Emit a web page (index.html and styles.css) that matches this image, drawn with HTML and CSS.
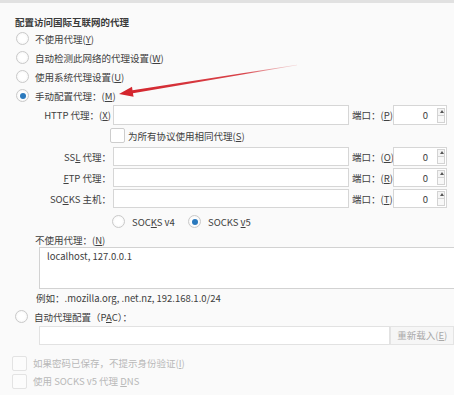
FILE: index.html
```html
<!DOCTYPE html>
<html lang="zh-CN">

<head>
  <meta charset="UTF-8">
  <meta name="viewport" content="width=device-width, initial-scale=1.0">
  <title>连接设置</title>
  <link rel="stylesheet" href="styles.css">
</head>

<body>
  <div class="dialog">
    <div class="title">配置访问国际互联网的代理</div>

    <div class="option"><span class="radio"></span><span>不使用代理(<u>Y</u>)</span></div>
    <div class="option"><span class="radio"></span><span>自动检测此网络的代理设置(<u>W</u>)</span></div>
    <div class="option"><span class="radio"></span><span>使用系统代理设置(<u>U</u>)</span></div>
    <div class="option"><span class="radio checked"></span><span>手动配置代理：(<u>M</u>)</span></div>

    <div class="proxy-row first">
      <label class="proxy-label">HTTP 代理：(<u>X</u>)</label>
      <div class="field"></div>
      <label class="port-label">端口：(<u>P</u>)</label>
      <div class="port">0<span class="spin"><i class="up"></i><i class="down"></i></span></div>
    </div>

    <div class="same-row"><span class="check"></span><span>为所有协议使用相同代理(<u>S</u>)</span></div>

    <div class="proxy-row">
      <label class="proxy-label">SS<u>L</u> 代理：</label>
      <div class="field"></div>
      <label class="port-label">端口：(<u>O</u>)</label>
      <div class="port">0<span class="spin"><i class="up"></i><i class="down"></i></span></div>
    </div>

    <div class="proxy-row">
      <label class="proxy-label"><u>F</u>TP 代理：</label>
      <div class="field"></div>
      <label class="port-label">端口：(<u>R</u>)</label>
      <div class="port">0<span class="spin"><i class="up"></i><i class="down"></i></span></div>
    </div>

    <div class="proxy-row">
      <label class="proxy-label">SO<u>C</u>KS 主机：</label>
      <div class="field"></div>
      <label class="port-label">端口：(<u>T</u>)</label>
      <div class="port">0<span class="spin"><i class="up"></i><i class="down"></i></span></div>
    </div>

    <div class="version-row">
      <div class="version"><span class="radio"></span><span>SOC<u>K</u>S v4</span></div>
      <div class="version"><span class="radio checked"></span><span>SOCKS <u>v</u>5</span></div>
    </div>

    <div class="noproxy-label">不使用代理：(<u>N</u>)</div>
    <div class="noproxy">localhost, 127.0.0.1</div>
    <div class="example">例如：.mozilla.org, .net.nz, 192.168.1.0/24</div>

    <div class="option pac"><span class="radio"></span><span>自动代理配置（P<u>A</u>C）：</span></div>
    <div class="pac-row">
      <div class="pac-field"></div>
      <div class="reload">重新载入(<u>E</u>)</div>
    </div>

    <div class="disabled-check first"><span class="check"></span><span>如果密码已保存，不提示身份验证(<u>I</u>)</span></div>
    <div class="disabled-check"><span class="check"></span><span>使用 SOCKS v5 代理 <u>D</u>NS</span></div>

    <!-- annotation arrow drawn over the dialog -->
    <svg class="arrow" width="454" height="395" viewBox="0 0 454 395">
      <defs>
        <linearGradient id="fade" x1="119" y1="94" x2="297" y2="65" gradientUnits="userSpaceOnUse">
          <stop offset="0" stop-color="#d3232b" />
          <stop offset="0.7" stop-color="#d8434a" />
          <stop offset="1" stop-color="#e8a0a3" stop-opacity="0.4" />
        </linearGradient>
      </defs>
      <polygon fill="url(#fade)"
        points="119,94 133.6,96.7 132.9,93.3 297,65.3 297,64.7 132.5,90.2 132,86.8" />
    </svg>
  </div>
</body>

</html>
```

FILE: styles.css
```css
body {
  margin: 0;
  background-color: #fafafa;
  color: #404040;
  font-family: "Noto Sans CJK SC", "Noto Sans", sans-serif;
  font-size: 9.5px;
}

u {
  text-underline-offset: 1px;
}

.dialog {
  position: relative;
  height: 380px;
  padding-top: 12px;
  border-top: 3px solid #e1e1e1;
  overflow: hidden;
}

.title {
  height: 14px;
  line-height: 14px;
  padding-left: 15px;
  font-weight: 600;
  color: #3a3a3a;
}

.option {
  height: 19px;
  display: flex;
  align-items: center;
  gap: 6px;
  padding-left: 16px;
}

.radio {
  width: 11px;
  height: 11px;
  border: 1px solid #c9c9c9;
  border-radius: 50%;
  background: radial-gradient(circle, #ffffff 40%, #f1f1f1 100%);
  display: flex;
  justify-content: center;
  align-items: center;
  flex: none;
}

.radio.checked::after {
  content: "";
  width: 6px;
  height: 6px;
  border-radius: 50%;
  background-color: #2a79bd;
}

.check {
  width: 13px;
  height: 13px;
  border: 1px solid #cdcdcd;
  border-radius: 2px;
  background-color: #fff;
  flex: none;
}

/* proxy host + port rows */
.proxy-row {
  display: grid;
  grid-template-columns: 111px 236px 40px 54px;
  column-gap: 2px;
  align-items: center;
  height: 21px;
}

.proxy-row.first {
  height: 20px;
}

.proxy-label {
  text-align: right;
  white-space: nowrap;
}

.port-label {
  padding-left: 1px;
  white-space: nowrap;
}

.field,
.port {
  height: 17px;
  border: 1px solid #d6d6d6;
  background-color: #fff;
}

.proxy-row.first .field,
.proxy-row.first .port {
  height: 18px;
}

.port {
  display: flex;
  justify-content: flex-end;
  align-items: center;
  padding-right: 1px;
}

.spin {
  display: flex;
  flex-direction: column;
  width: 8px;
  margin-left: 9px;
}

.spin i {
  position: relative;
  height: 6px;
  border: 1px solid #d3d3d3;
  background-color: #f4f4f4;
}

.spin .up::after {
  content: "";
  position: absolute;
  left: 2px;
  top: 1px;
  border-left: 2px solid transparent;
  border-right: 2px solid transparent;
  border-bottom: 3px solid #555;
}

.spin .down {
  border-top: none;
  background-color: #f8f8f8;
}

.same-row {
  height: 21px;
  display: flex;
  align-items: center;
  gap: 3px;
  padding-left: 110px;
}

.version-row {
  height: 25px;
  display: flex;
  align-items: center;
  padding-left: 112px;
}

.version {
  display: flex;
  align-items: center;
  gap: 7px;
  width: 76px;
}

.noproxy-label {
  height: 12px;
  line-height: 12px;
  padding-left: 35px;
}

.noproxy {
  margin: 1px 0 0 39px;
  width: 430px;
  height: 38px;
  padding: 2px 7px 0;
  line-height: 12px;
  border: 1px solid #d2d2d2;
  background-color: #fff;
}

.example {
  height: 19px;
  line-height: 19px;
  padding-left: 36px;
}

.option.pac {
  height: 17px;
  padding-left: 15px;
}

.pac-row {
  display: flex;
  height: 19px;
  margin-top: 1px;
  padding-left: 39px;
}

.pac-field {
  width: 351px;
  border: 1px solid #e2e2e2;
  background-color: #fff;
}

.reload {
  width: 56px;
  padding-left: 6px;
  line-height: 17px;
  border: 1px solid #e4e4e4;
  background-color: #f6f6f6;
  color: #a9a9a9;
}

.disabled-check {
  height: 18px;
  display: flex;
  align-items: center;
  gap: 6px;
  padding-left: 12px;
  color: #b8b8b8;
}

.disabled-check.first {
  margin-top: 9px;
}

.disabled-check .check {
  border-color: #e3e3e3;
  background-color: #fcfcfc;
}

.arrow {
  position: absolute;
  top: -3px;
  left: 0;
  pointer-events: none;
}
```
